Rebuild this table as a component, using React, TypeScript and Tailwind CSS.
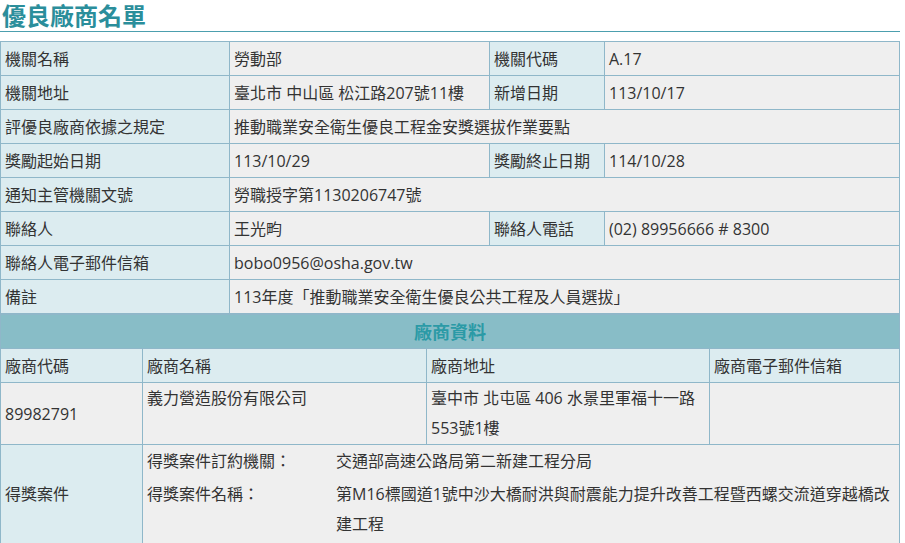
const FONT = 'font-["Open_Sans","Noto_Sans_CJK_TC",sans-serif]'

const th = 'h-[34px] border border-[#8fb7c9] bg-[#dcecf0] px-[4px] text-left align-middle font-normal'
const td = 'h-[34px] border border-[#8fb7c9] bg-[#efefef] px-[4px] text-left align-middle'

type Row = [string, string, string?, string?]

const INFO: Row[] = [
  ['機關名稱', '勞動部', '機關代碼', 'A.17'],
  ['機關地址', '臺北市 中山區 松江路207號11樓', '新增日期', '113/10/17'],
  ['評優良廠商依據之規定', '推動職業安全衛生優良工程金安獎選拔作業要點'],
  ['獎勵起始日期', '113/10/29', '獎勵終止日期', '114/10/28'],
  ['通知主管機關文號', '勞職授字第1130206747號'],
  ['聯絡人', '王光畇', '聯絡人電話', '(02) 89956666 # 8300'],
  ['聯絡人電子郵件信箱', 'bobo0956@osha.gov.tw'],
  ['備註', '113年度「推動職業安全衛生優良公共工程及人員選拔」'],
]

export default function App() {
  return (
    <div className={`${FONT} w-[900px] bg-white text-[16px] leading-[30px] text-[#333]`}>
      <h1 className="h-[32px] overflow-visible border-b border-[#4c9fae] pt-[1px] pl-[2px] text-[24px] leading-[30px] font-semibold text-[#2b8e9b]">
        優良廠商名單
      </h1>

      <table className="mt-[9px] w-[900px] table-fixed border-collapse">
        <colgroup>
          <col className="w-[229px]" />
          <col className="w-[260px]" />
          <col className="w-[115px]" />
          <col />
        </colgroup>
        <tbody>
          {INFO.map(([k1, v1, k2, v2]) =>
            k2 ? (
              <tr key={k1}>
                <th className={th}>{k1}</th>
                <td className={td}>{v1}</td>
                <th className={th}>{k2}</th>
                <td className={td}>{v2}</td>
              </tr>
            ) : (
              <tr key={k1}>
                <th className={th}>{k1}</th>
                <td className={td} colSpan={3}>
                  {v1}
                </td>
              </tr>
            ),
          )}
        </tbody>
      </table>

      <table className="w-[900px] table-fixed border-collapse">
        <colgroup>
          <col className="w-[142px]" />
          <col className="w-[284px]" />
          <col className="w-[283px]" />
          <col />
        </colgroup>
        <tbody>
          <tr>
            <th
              colSpan={4}
              className="h-[34px] border border-[#8fb7c9] bg-[#88bdc7] text-center text-[18px] font-semibold text-[#2b9aa6]"
            >
              廠商資料
            </th>
          </tr>
          <tr>
            <th className={th}>廠商代碼</th>
            <th className={th}>廠商名稱</th>
            <th className={th}>廠商地址</th>
            <th className={th}>廠商電子郵件信箱</th>
          </tr>
          <tr>
            <td className={`${td} h-[62px]`}>89982791</td>
            <td className={`${td} h-[62px] align-top`}>義力營造股份有限公司</td>
            <td className={`${td} h-[62px] align-top`}>
              臺中市 北屯區 406 水景里軍福十一路553號1樓
            </td>
            <td className={`${td} h-[62px]`}></td>
          </tr>
          <tr>
            <th className={`${th} h-[99px]`}>得獎案件</th>
            <td colSpan={3} className="h-[99px] border border-[#8fb7c9] bg-[#efefef] px-[4px] pt-[1px] align-top">
              <div className="grid grid-cols-[189px_1fr]">
                <div>得獎案件訂約機關：</div>
                <div>交通部高速公路局第二新建工程分局</div>
                <div className="pt-[3px]">得獎案件名稱：</div>
                <div className="pt-[3px]">第M16標國道1號中沙大橋耐洪與耐震能力提升改善工程暨西螺交流道穿越橋改建工程</div>
              </div>
            </td>
          </tr>
        </tbody>
      </table>
    </div>
  )
}
